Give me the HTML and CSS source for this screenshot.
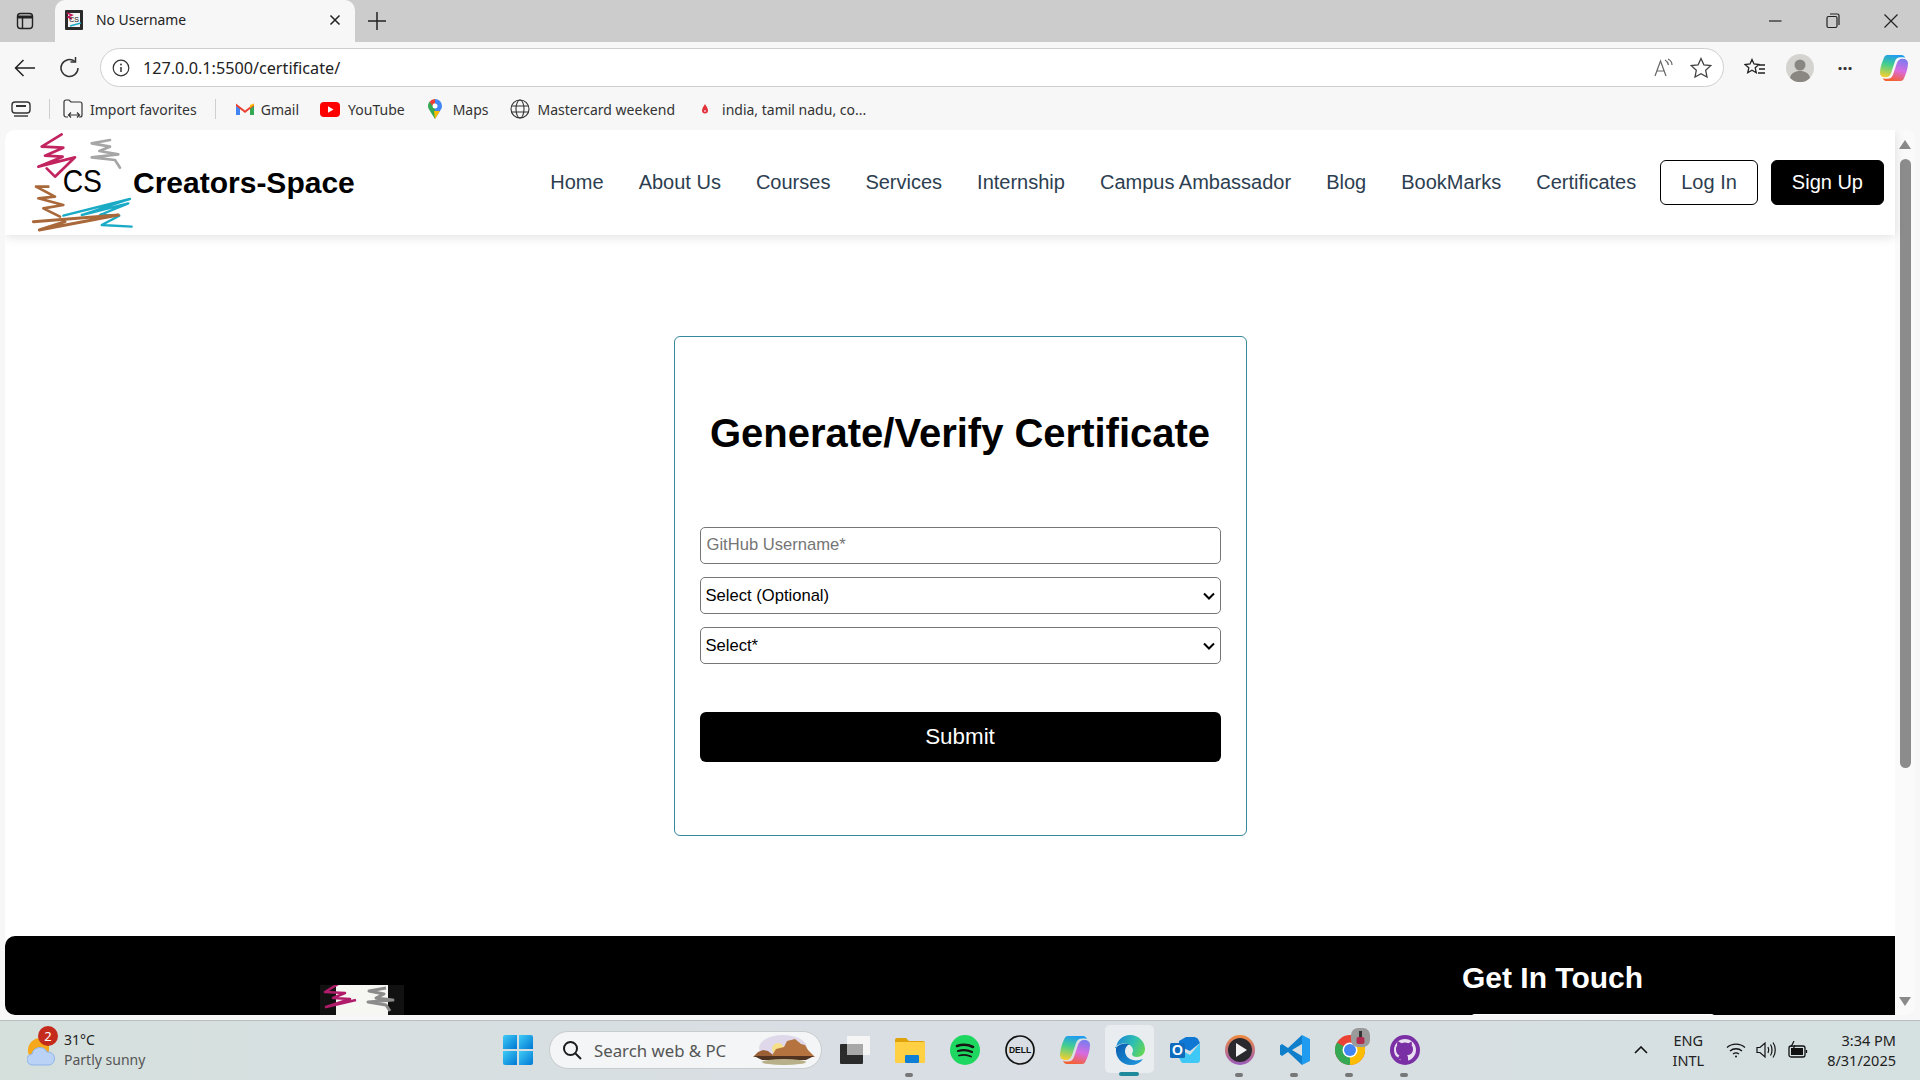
FILE: index.html
```html
<!DOCTYPE html>
<html lang="en">
<head>
    <meta charset="UTF-8">
    <title>No Username</title>
    <link rel="stylesheet" href="styles.css">
</head>
<body>
    <svg class="defs" width="0" height="0">
        <defs>
            <linearGradient id="copA" x1="0.5" y1="0" x2="0.3" y2="1">
                <stop offset="0" stop-color="#1f9cf0"/>
                <stop offset="0.45" stop-color="#45cf8c"/>
                <stop offset="1" stop-color="#f5cf30"/>
            </linearGradient>
            <linearGradient id="copB" x1="0.7" y1="0" x2="0.4" y2="1">
                <stop offset="0" stop-color="#7a7cf0"/>
                <stop offset="0.5" stop-color="#d86be0"/>
                <stop offset="1" stop-color="#f5602f"/>
            </linearGradient>
            <linearGradient id="edgeA" x1="0" y1="0.3" x2="1" y2="0.7">
                <stop offset="0" stop-color="#1a86d8"/>
                <stop offset="0.55" stop-color="#2fc0b0"/>
                <stop offset="1" stop-color="#66d653"/>
            </linearGradient>
            <linearGradient id="edgeB" x1="0" y1="0" x2="1" y2="1">
                <stop offset="0" stop-color="#0a5cad"/>
                <stop offset="1" stop-color="#1f9be0"/>
            </linearGradient>
            <linearGradient id="winA" x1="0" y1="0" x2="1" y2="1">
                <stop offset="0" stop-color="#3fcbf5"/>
                <stop offset="1" stop-color="#0078d4"/>
            </linearGradient>
            <linearGradient id="playRing" x1="0" y1="0" x2="0" y2="1">
                <stop offset="0" stop-color="#f08a3c"/>
                <stop offset="1" stop-color="#9a5cc0"/>
            </linearGradient>
            <symbol id="copilot" viewBox="0 0 30 30">
                <path d="M8 1h15c2 0 3 1 4 3-1-.5-3-.5-5-.5-3 0-5 1.500-6 4.500l-4 12c-1 3-3 5-6 5-4 0-6-2-6-5 0-5 2-11 4-15.500C5 2 6 1 8 1z" fill="url(#copA)"/>
                <path d="M22 29H7c-2 0-3-1-4-3 1 .5 3 .5 5 .5 3 0 5-1.500 6-4.500l4-12c1-3 3-5 6-5 4 0 6 2 6 5 0 5-2 11-4 15.500C25 28 24 29 22 29z" fill="url(#copB)"/>
            </symbol>
        </defs>
    </svg>

    <div class="browser">
        <div class="tabstrip">
            <span class="chrome-btn side-btn">
                <svg width="18" height="18" viewBox="0 0 18 18" fill="none" stroke="#222" stroke-width="1.400"><rect x="1.500" y="1.500" width="15" height="15" rx="3"/><path d="M1.500 5h15" stroke-width="3"/><path d="M6.500 5v11"/></svg>
            </span>
            <div class="tab">
                <svg class="favicon" width="18" height="20" viewBox="0 0 18 20">
                    <rect width="18" height="20" rx="1" fill="#2a2a2a"/>
                    <rect x="3" y="3" width="12" height="14" fill="#f4f4f4"/>
                    <path d="M2 3l5 2-4 2 4 2" fill="none" stroke="#c2185b" stroke-width="1.500"/>
                    <path d="M5 16l11-3" stroke="#19a9c6" stroke-width="1.500"/>
                    <text x="9" y="12" class="favicon-text">CS</text>
                </svg>
                <span class="tab-title">No Username</span>
                <svg class="tab-close" width="12" height="12" viewBox="0 0 12 12" stroke="#222" stroke-width="1.500"><path d="M1.500 1.500l9 9M10.500 1.500l-9 9"/></svg>
            </div>
            <svg class="new-tab" width="18" height="18" viewBox="0 0 18 18" stroke="#222" stroke-width="1.500"><path d="M9 0v18M0 9h18"/></svg>
            <div class="window-controls">
                <svg width="14" height="14" viewBox="0 0 14 14" stroke="#222" stroke-width="1.200"><path d="M1 7h12.500"/></svg>
                <svg width="14" height="16" viewBox="0 0 14 16" fill="none" stroke="#222" stroke-width="1.200"><rect x="1" y="3.500" width="10" height="11" rx="1.500"/><path d="M4 1h7.500a1.500 1.500 0 0 1 1.500 1.500V12"/></svg>
                <svg width="14" height="14" viewBox="0 0 14 14" stroke="#222" stroke-width="1.200"><path d="M.5.500l13 13M13.500.500l-13 13"/></svg>
            </div>
        </div>

        <div class="toolbar">
            <svg class="tool-back" width="22" height="18" viewBox="0 0 22 18" fill="none" stroke="#222" stroke-width="1.500"><path d="M21 9H2M9.500 1L1.500 9l8 8"/></svg>
            <svg class="tool-reload" width="22" height="22" viewBox="0 0 22 22" fill="none" stroke="#333" stroke-width="1.500"><path d="M19 11a8.500 8.500 0 1 1-3-6.500"/><path d="M16.500 0v5h-5"/></svg>
            <div class="address">
                <svg width="18" height="18" viewBox="0 0 18 18" fill="none" stroke="#333" stroke-width="1.200"><circle cx="9" cy="9" r="7.800"/><path d="M9 8v5" stroke-width="1.500"/><circle cx="9" cy="5.500" r=".9" fill="#333" stroke="none"/></svg>
                <span class="url">127.0.0.1:5500/certificate/</span>
                <svg class="addr-read" width="20" height="20" viewBox="0 0 20 20" fill="none" stroke="#666" stroke-width="1.200"><path d="M1 18L6.500 3 12 18M3 13h7"/><path d="M11 2c2 1 3 3 3.500 5M14 1c2 1 4 3.500 4 6"/></svg>
                <svg class="addr-star" width="22" height="22" viewBox="0 0 22 22" fill="none" stroke="#444" stroke-width="1.300"><path d="M11 1.500l2.900 6.300 6.800.8-5 4.700 1.300 6.800-6-3.400-6 3.400 1.300-6.800-5-4.700 6.800-.8z"/></svg>
            </div>
            <svg class="tool-favs" width="22" height="20" viewBox="0 0 22 20" fill="none" stroke="#222" stroke-width="1.300"><path d="M8 1.500l2 4.500 5 .5-3.800 3.300 1.100 5-4.300-2.500-4.300 2.500 1.100-5L1 6.500 6 6z"/><path d="M15 7h6M15 11h6M14 15h7"/></svg>
            <svg class="tool-profile" width="28" height="28" viewBox="0 0 28 28"><circle cx="14" cy="14" r="14" fill="#d5d3cf"/><circle cx="14" cy="11" r="5.500" fill="#8a8782"/><path d="M4 24c1-5 5-7 10-7s9 2 10 7a14 14 0 0 1-20 0z" fill="#8a8782"/></svg>
            <span class="tool-dots">···</span>
            <svg class="tool-copilot" width="28" height="28"><use href="#copilot"/></svg>
        </div>

        <div class="favbar">
            <svg class="fav-collections" width="20" height="16" viewBox="0 0 20 16" fill="none" stroke="#333" stroke-width="1.400"><rect x="1" y="1" width="18" height="11" rx="3"/><path d="M5 5h10" stroke-width="2"/><path d="M3 15h14"/></svg>
            <span class="fav-sep"></span>
            <div class="fav-item fav-import">
                <svg width="20" height="20" viewBox="0 0 20 20" fill="none" stroke="#333" stroke-width="1.200"><path d="M5 18H3a2 2 0 0 1-2-2V3a2 2 0 0 1 2-2h3l2 2h9a2 2 0 0 1 2 2v11a2 2 0 0 1-2 2h-1"/><path d="M6 16h10M8 13.500L5.500 16 8 18.500M14 13.500l2.500 2.500-2.500 2.500"/></svg>
                <span>Import favorites</span>
            </div>
            <span class="fav-sep fav-sep-2"></span>
            <div class="fav-item fav-gmail">
                <svg width="18" height="14" viewBox="0 0 18 14"><path d="M0 2v11h4V6z" fill="#4285f4"/><path d="M18 2v11h-4V6z" fill="#34a853"/><path d="M0 1.500l9 7 9-7V4l-9 7-9-7z" fill="#ea4335"/><path d="M14 3v3l4-3V1.500z" fill="#fbbc04"/></svg>
                <span>Gmail</span>
            </div>
            <div class="fav-item fav-youtube">
                <svg width="20" height="15" viewBox="0 0 20 15"><rect width="20" height="15" rx="4" fill="#f00"/><path d="M8 4.200l5.500 3.300L8 10.800z" fill="#fff"/></svg>
                <span>YouTube</span>
            </div>
            <div class="fav-item fav-maps">
                <svg width="14" height="20" viewBox="0 0 14 20"><path d="M7 0a7 7 0 0 1 7 7c0 2-1 3.500-2 5L7 20z" fill="#4285f4"/><path d="M7 20l-5-8C1 10.500 0 9 0 7a7 7 0 0 1 1.500-4.300L7 7z" fill="#34a853"/><path d="M1.500 2.700A7 7 0 0 1 7 0v4.500A2.500 2.500 0 0 0 4.500 7z" fill="#ea4335"/><path d="M7 20l5-8H6z" fill="#fbbc04"/><circle cx="7" cy="7" r="2.500" fill="#fff"/></svg>
                <span>Maps</span>
            </div>
            <div class="fav-item fav-master">
                <svg width="20" height="20" viewBox="0 0 20 20" fill="none" stroke="#333" stroke-width="1.100"><circle cx="10" cy="10" r="9"/><ellipse cx="10" cy="10" rx="4" ry="9"/><path d="M1.500 7h17M1.500 13h17"/></svg>
                <span>Mastercard weekend</span>
            </div>
            <div class="fav-item fav-india">
                <svg width="10" height="12" viewBox="0 0 10 12"><path d="M5 1c1 2 3 4 3 6.500a3 3 0 0 1-6 0C2 5 4 3 5 1z" fill="#e2333a"/><circle cx="5" cy="8" r="1" fill="#fbd"/></svg>
                <span>india, tamil nadu, co...</span>
            </div>
        </div>

        <div class="viewport">
            <div class="page">
                <div class="page-body">
                    <header class="site-header">
                        <div class="brand">
                            <svg class="brand-logo" width="105" height="105" viewBox="90 15 315 315" fill="none" stroke-linecap="round" stroke-linejoin="round">
                                <path d="M185 28L125 65 190 68 135 92 188 95 115 125 225 97 165 155 140 130" stroke="#c2245f" stroke-width="8"/>
                                <path d="M330 45L275 55 330 65 298 78 355 88 275 97 345 105 360 128" stroke="#a6a6a6" stroke-width="8"/>
                                <path d="M145 185L108 185 165 215 115 220 190 240 130 250 180 275" stroke="#a9683a" stroke-width="8"/>
                                <path d="M190 272L390 222 245 270 385 235 300 270 358 272 305 300 395 305" stroke="#19aac6" stroke-width="7"/>
                                <path d="M100 290L355 270 118 315 195 290" stroke="#a9683a" stroke-width="9"/>
                                <text x="188" y="201" class="logo-cs" textLength="118" lengthAdjust="spacingAndGlyphs">CS</text>
                            </svg>
                            <span class="brand-name">Creators-Space</span>
                        </div>
                        <nav class="site-nav">
                            <a href="#">Home</a>
                            <a href="#">About Us</a>
                            <a href="#">Courses</a>
                            <a href="#">Services</a>
                            <a href="#">Internship</a>
                            <a href="#">Campus Ambassador</a>
                            <a href="#">Blog</a>
                            <a href="#">BookMarks</a>
                            <a href="#">Certificates</a>
                        </nav>
                        <div class="auth">
                            <button class="btn-login">Log In</button>
                            <button class="btn-signup">Sign Up</button>
                        </div>
                    </header>

                    <main class="site-main">
                        <form class="cert-card">
                            <h1>Generate/Verify Certificate</h1>
                            <input class="field" type="text" placeholder="GitHub Username*">
                            <select class="field">
                                <option>Select (Optional)</option>
                            </select>
                            <select class="field">
                                <option>Select*</option>
                            </select>
                            <button class="btn-submit" type="button">Submit</button>
                        </form>
                    </main>

                    <footer class="site-footer">
                        <div class="footer-logo">
                            <svg width="84" height="44" viewBox="0 0 84 44" fill="none" stroke-linejoin="round">
                                <rect width="84" height="44" fill="#111"/>
                                <rect x="16" width="52" height="44" fill="#f6f6f2"/>
                                <path d="M23-4L5 7l20 1-12 5 17 1-24 8 30-7" stroke="#b01c6a" stroke-width="2.500"/>
                                <path d="M66 3L49 6l15 3-8 4 17 2-25 2 18 3 4 6" stroke="#8b8b8b" stroke-width="3"/>
                            </svg>
                        </div>
                        <div class="footer-contact">
                            <h2>Get In Touch</h2>
                            <input class="footer-input" type="text">
                        </div>
                    </footer>
                </div>
                <div class="scrollbar">
                    <span class="arrow-up"></span>
                    <span class="thumb"></span>
                    <span class="arrow-down"></span>
                </div>
            </div>
        </div>

        <div class="taskbar">
            <div class="weather">
                <svg class="weather-icon" width="28" height="34" viewBox="0 0 28 34">
                    <path d="M14 5A12 12 0 0 0 1 17c0 5 2 8 5 10h16V8z" fill="#f5a81c"/>
                    <path d="M6 32a5.500 5.500 0 0 1-1-11 8 8 0 0 1 15-2 6.500 6.500 0 0 1 2 13z" fill="#b9d2f5" stroke="#8fb4ea"/>
                </svg>
                <span class="weather-badge">2</span>
                <div class="weather-text">
                    <span class="temp">31°C</span>
                    <span class="cond">Partly sunny</span>
                </div>
            </div>

            <div class="task-cell start">
                <svg width="30" height="30" viewBox="0 0 30 30" fill="url(#winA)"><path d="M2 0h12v14H0V2a2 2 0 0 1 2-2z"/><path d="M16 0h12a2 2 0 0 1 2 2v12H16z"/><path d="M0 16h14v14H2a2 2 0 0 1-2-2z"/><path d="M16 16h14v12a2 2 0 0 1-2 2H16z"/></svg>
            </div>

            <div class="search-pill">
                <svg width="20" height="20" viewBox="0 0 20 20" fill="none" stroke="#1b1b1b" stroke-width="2"><circle cx="8.500" cy="8.500" r="6.500"/><path d="M13.500 13.500L19 19"/></svg>
                <span>Search web &amp; PC</span>
                <svg class="search-art" width="62" height="30" viewBox="0 0 62 30">
                    <ellipse cx="30" cy="13" rx="24" ry="13" fill="#dfd8ea"/>
                    <circle cx="25" cy="14" r="6" fill="#f7e08a"/>
                    <path d="M0 22l5-5 5-2 5 1 5 4 3 2z" fill="#9a5f35"/>
                    <path d="M18 22l5-8 8-2 3-6 8-2 6 5 4 1 3 5 7 7z" fill="#b5743f"/>
                    <path d="M1 21h60l-8 4H9z" fill="#4f3320"/>
                    <ellipse cx="31" cy="27" rx="22" ry="3" fill="#b8b088"/>
                </svg>
            </div>

            <div class="task-cell">
                <svg width="30" height="28" viewBox="0 0 30 28"><rect y="8" width="23" height="20" rx="1" fill="#2b2b2b"/><rect x="7" width="23" height="19" rx="1" fill="#f5f5f5"/><rect x="7" y="8" width="16" height="11" fill="#a8a8a8"/></svg>
            </div>
            <div class="task-cell has-dot">
                <svg width="30" height="26" viewBox="0 0 30 26"><path d="M0 3a2 2 0 0 1 2-2h9l3 3h14a2 2 0 0 1 2 2v2H0z" fill="#e0a20b"/><rect y="5" width="30" height="21" rx="1" fill="#ffd044"/><rect x="10" y="18" width="14" height="8" rx="1" fill="#0f7fd6"/></svg>
            </div>
            <div class="task-cell">
                <svg width="30" height="30" viewBox="0 0 30 30" fill="none" stroke="#191414" stroke-linecap="round"><circle cx="15" cy="15" r="15" fill="#1ed760" stroke="none"/><path d="M7 11c6-2 11-1.500 16 1" stroke-width="2.600"/><path d="M8 16c5-1.500 10-1 14 1" stroke-width="2.200"/><path d="M9 20.500c4-1 8-1 12 1" stroke-width="1.800"/></svg>
            </div>
            <div class="task-cell">
                <svg width="30" height="30" viewBox="0 0 30 30"><circle cx="15" cy="15" r="14" fill="none" stroke="#111" stroke-width="1.700"/><text x="15" y="18" class="dell-text">DELL</text></svg>
            </div>
            <div class="task-cell">
                <svg width="30" height="30"><use href="#copilot"/></svg>
            </div>
            <div class="task-cell active">
                <svg width="30" height="30" viewBox="0 0 30 30">
                    <path d="M1 13C2 5 8 0 15 0c9 0 15 7 15 14 0 5-4 8-8 8-3 0-5-1-5-3 0-1 1-1.500 1-3.500 0-4-4-7-8-7-5 0-9 2-10 4.500z" fill="url(#edgeA)"/>
                    <path d="M1 13C0 23 7 30 16 30c5 0 9-2 12-6-3 1-7 2-10 1-5-1-8-5-8-9 0-3 2-6 5-7-6-1-12 0-14 4z" fill="url(#edgeB)"/>
                </svg>
                <span class="active-bar"></span>
            </div>
            <div class="task-cell">
                <svg width="30" height="26" viewBox="0 0 30 26">
                    <path d="M9 4l7-4h8c2 0 3 1 4 2l2 4-10 8-11-5z" fill="#0f78d4"/>
                    <path d="M30 6v17a3 3 0 0 1-3 3H12l-3-5V12l11 6z" fill="#3fc8f5"/>
                    <rect y="6" width="15" height="15" rx="1.500" fill="#0f6cbd"/>
                    <text x="7.500" y="18" class="outlook-text">O</text>
                </svg>
            </div>
            <div class="task-cell has-dot">
                <svg width="30" height="30" viewBox="0 0 30 30"><circle cx="15" cy="15" r="15" fill="url(#playRing)"/><circle cx="15" cy="15" r="12" fill="#2a2a2e"/><path d="M11 8l11 7-11 7z" fill="#f2f2f2"/></svg>
            </div>
            <div class="task-cell has-dot">
                <svg width="30" height="30" viewBox="0 0 30 30"><path d="M22 0L8 13 2 9 0 10.500v9L2 21l6-4 14 13v-9l-10-6 10-6z" fill="#0f7fcc"/><path d="M22 0l8 4v22l-8 4z" fill="#1f9cf0"/></svg>
            </div>
            <div class="task-cell has-dot">
                <svg width="30" height="30" viewBox="0 0 30 30"><circle cx="15" cy="15" r="15" fill="#ea4335"/><path d="M15 15L15 30A15 15 0 0 1 2 7.500z" fill="#34a853"/><path d="M15 15L28 7.500A15 15 0 0 1 15 30z" fill="#fbbc04"/><circle cx="15" cy="15" r="7.500" fill="#fff"/><circle cx="15" cy="15" r="6" fill="#4285f4"/></svg>
                <svg class="chrome-badge" width="19" height="19" viewBox="0 0 19 19"><rect width="19" height="19" rx="7" fill="#9a9a9a"/><path d="M9.500 3v7" stroke="#333" stroke-width="3"/><rect x="5.500" y="9" width="8" height="7" rx="2" fill="#b02c50"/></svg>
            </div>
            <div class="task-cell has-dot">
                <svg width="30" height="30" viewBox="0 0 30 30"><circle cx="15" cy="15" r="15" fill="#7b2fa5"/><circle cx="15" cy="15" r="11" fill="#e9dff0"/><path d="M8.500 6.500l3 1.800a9 9 0 0 1 7 0l3-1.800c.5 1.500.5 3 .2 4 1 1 1.300 2.500 1.300 3.500 0 4-2.500 6-6 6.300.8.7 1 1.700 1 3v3h-7.500v-2c-2.500.5-4-.5-5-3 1 0 2 1 3 1.500 0-1 .4-2 1-2.500C8 20 6 18 6 14c0-1 .3-2.500 1.300-3.500-.3-1-.3-2.500.2-4z" fill="#7b2fa5"/></svg>
            </div>

            <div class="tray">
                <svg class="tray-chevron" width="14" height="8" viewBox="0 0 14 8" fill="none" stroke="#111" stroke-width="1.600"><path d="M1 7l6-6 6 6"/></svg>
                <div class="tray-lang"><span>ENG</span><span>INTL</span></div>
                <svg class="tray-wifi" width="20" height="16" viewBox="0 0 20 16" fill="none" stroke="#111" stroke-width="1.300"><path d="M1 5.500c5-4.500 13-4.500 18 0M4 9c3.500-3 8.500-3 12 0M7 12c2-1.500 4-1.500 6 0"/><circle cx="10" cy="14.500" r="1" fill="#111" stroke="none"/></svg>
                <svg class="tray-vol" width="20" height="20" viewBox="0 0 20 20" fill="none" stroke="#111" stroke-width="1.200"><path d="M1 7.500h3L9 3v14l-5-4.500H1z"/><path d="M12 7c1 2 1 4 0 6M14.500 4.500c2 3 2 8 0 11M17 2.500c3 4 3 11 0 15"/></svg>
                <svg class="tray-batt" width="20" height="18" viewBox="0 0 20 18" fill="none" stroke="#111" stroke-width="1.300"><rect x="1" y="5" width="16" height="11" rx="2"/><path d="M18.500 9v3"/><rect x="3" y="7" width="12" height="7" fill="#111" stroke="none"/><path d="M6 0L3.500 5h3L5 9" stroke-width="1.200" fill="#d6dfe0"/></svg>
                <div class="tray-clock"><span>3:34 PM</span><span>8/31/2025</span></div>
            </div>
        </div>
    </div>
</body>
</html>
```

FILE: styles.css
```css
* {
    margin: 0;
    padding: 0;
    box-sizing: border-box;
}

html, body {
    height: 100%;
    overflow: hidden;
}

body {
    font-family: 'Liberation Sans', Arial, sans-serif;
    background-color: #f7f7f7;
}

svg {
    display: block;
    flex-shrink: 0;
}

.defs {
    position: absolute;
}

.browser {
    display: flex;
    flex-direction: column;
    height: 1080px;
    width: 1920px;
    font-family: 'Noto Sans', 'Open Sans', sans-serif;
}

/* tab strip */
.tabstrip {
    display: flex;
    align-items: center;
    height: 42px;
    background-color: #cccccc;
}

.chrome-btn {
    display: flex;
    justify-content: center;
    width: 55px;
    padding-right: 5px;
}

.tab {
    display: flex;
    align-items: center;
    width: 300px;
    height: 42px;
    padding: 0 14px 2px 10px;
    background-color: #f7f7f7;
    border-radius: 10px 10px 0 0;
}

.favicon-text {
    font-family: 'Liberation Sans', sans-serif;
    font-size: 7px;
    text-anchor: middle;
    fill: #111;
}

.tab-title {
    margin: -2px 0 0 13px;
    font-size: 13.900px;
    color: #222;
}

.tab-close {
    margin-left: auto;
}

.new-tab {
    margin-left: 13px;
}

.window-controls {
    display: flex;
    align-items: center;
    gap: 44px;
    margin-left: auto;
    padding-right: 22px;
}

/* address row */
.toolbar {
    display: flex;
    align-items: center;
    height: 46px;
    padding: 5px 0 0 14px;
    background-color: #f7f7f7;
}

.tool-reload {
    margin-left: 23px;
}

.address {
    display: flex;
    align-items: center;
    width: 1624px;
    height: 39px;
    margin-left: 19px;
    padding: 0 11px 0 11px;
    background-color: #fff;
    border: 1px solid #cfcfcf;
    border-radius: 20px;
}

.url {
    margin-left: 13px;
    font-size: 16.200px;
    color: #222;
}

.addr-read {
    margin-left: auto;
}

.addr-star {
    margin-left: 16px;
}

.tool-favs {
    margin-left: 20px;
}

.tool-profile {
    margin-left: 20px;
}

.tool-dots {
    width: 44px;
    margin-left: 9px;
    text-align: center;
    font-size: 18px;
    font-weight: 700;
    color: #333;
}

.tool-copilot {
    margin-left: 13px;
}

/* favorites row */
.favbar {
    display: flex;
    align-items: center;
    height: 42px;
    padding-left: 11px;
    background-color: #f7f7f7;
    font-size: 14px;
    color: #333;
}

.fav-sep {
    width: 1px;
    height: 20px;
    margin-left: 18px;
    background-color: #cfcfcf;
}

.fav-sep-2 {
    margin-left: 18px;
}

.fav-item {
    display: flex;
    align-items: center;
    gap: 8px;
}

.fav-import {
    margin-left: 13px;
    gap: 7px;
}

.fav-gmail {
    margin-left: 20px;
    gap: 7px;
}

.fav-youtube {
    margin-left: 21px;
}

.fav-maps {
    margin-left: 23px;
    gap: 11px;
}

.fav-master {
    margin-left: 21px;
}

.fav-india {
    margin-left: 25px;
    gap: 12px;
}

/* page */
.viewport {
    flex: 1;
    min-height: 0;
    padding: 0 5px 5px;
    background-color: #f7f7f7;
}

.page {
    display: flex;
    height: 100%;
    overflow: hidden;
    background-color: #fff;
    border-radius: 10px;
    font-family: 'Liberation Sans', Arial, sans-serif;
}

.page-body {
    flex: 1;
    min-width: 0;
}

.site-header {
    display: flex;
    align-items: center;
    height: 105px;
    padding-right: 11px;
    background-color: #fff;
    box-shadow: 0 2px 10px rgba(0, 0, 0, 0.12);
    position: relative;
}

.brand {
    display: flex;
    align-items: center;
    margin-left: 25px;
}

.logo-cs {
    font-family: 'Liberation Sans', sans-serif;
    font-size: 92px;
    fill: #000;
    stroke: none;
}

.brand-name {
    margin: 1px 0 0 -2px;
    font-size: 30px;
    font-weight: 700;
    color: #000;
}

.site-nav {
    display: flex;
    gap: 35px;
    margin-left: auto;
}

.site-nav a {
    font-size: 20px;
    color: #2c3e50;
    text-decoration: none;
}

.auth {
    display: flex;
    gap: 13px;
    margin-left: 24px;
}

.auth button {
    height: 45px;
    padding: 0 20px;
    font-family: inherit;
    font-size: 20px;
    border: 1px solid #000;
    border-radius: 6px;
}

.btn-login {
    background-color: #fff;
    color: #2c3e50;
}

.btn-signup {
    background-color: #000;
    color: #fff;
}

.site-main {
    display: flex;
    justify-content: center;
    padding: 101px 0 100px 20px;
}

.cert-card {
    display: flex;
    flex-direction: column;
    width: 573px;
    height: 500px;
    padding: 73px 25px 0;
    border: 1px solid #35889a;
    border-radius: 6px;
    background-color: #fff;
}

.cert-card h1 {
    margin-bottom: 71px;
    font-size: 40px;
    line-height: 46px;
    font-weight: 700;
    text-align: center;
    color: #000;
}

.field {
    width: 100%;
    height: 37px;
    margin-bottom: 13px;
    font-family: inherit;
    font-size: 16.600px;
    color: #000;
    background-color: #fff;
    border: 1px solid #767676;
    border-radius: 5px;
}

input.field {
    padding: 0 6px 2px;
}

select.field {
    padding-left: 5px;
    appearance: none;
    background-image: url("data:image/svg+xml,%3Csvg xmlns='http://www.w3.org/2000/svg' width='12' height='8' viewBox='0 0 12 8'%3E%3Cpath d='M1 1.500l5 5 5-5' fill='none' stroke='%23000' stroke-width='2'/%3E%3C/svg%3E");
    background-repeat: no-repeat;
    background-position: right 5px center;
}

.btn-submit {
    height: 50px;
    margin-top: 35px;
    font-family: inherit;
    font-size: 22.400px;
    color: #fff;
    background-color: #000;
    border: none;
    border-radius: 6px;
}

.site-footer {
    display: flex;
    height: 400px;
    background-color: #000;
    border-radius: 10px 0 0 0;
}

.footer-logo {
    margin: 49px 0 0 315px;
}

.footer-contact {
    margin-left: 1058px;
    padding-top: 23px;
}

.footer-contact h2 {
    font-size: 30px;
    line-height: 37px;
    font-weight: 700;
    color: #fff;
}

.footer-input {
    display: block;
    width: 244px;
    height: 40px;
    margin: 18px 0 0 9px;
    background-color: #fff;
    border: none;
    border-radius: 4px;
}

.scrollbar {
    display: flex;
    flex-direction: column;
    align-items: center;
    width: 20px;
    padding-top: 10px;
    background-color: #fafafa;
}

.arrow-up {
    width: 0;
    height: 0;
    border-left: 6px solid transparent;
    border-right: 6px solid transparent;
    border-bottom: 9px solid #8a8a8a;
}

.thumb {
    width: 11px;
    height: 609px;
    margin-top: 10px;
    background-color: #8c8c8c;
    border-radius: 6px;
}

.arrow-down {
    width: 0;
    height: 0;
    margin-top: 229px;
    border-left: 6px solid transparent;
    border-right: 6px solid transparent;
    border-top: 9px solid #8a8a8a;
}

/* taskbar */
.taskbar {
    display: flex;
    align-items: center;
    height: 60px;
    padding-bottom: 1px;
    background: linear-gradient(90deg, #d5e0dd, #d9dee4 45%, #d5e0e0);
    border-top: 1px solid #b9bfc0;
}

.weather {
    display: flex;
    align-items: center;
    width: 490px;
    padding-left: 27px;
    position: relative;
}

.weather-badge {
    position: absolute;
    left: 38px;
    top: -4px;
    width: 20px;
    height: 20px;
    font-size: 13px;
    line-height: 20px;
    text-align: center;
    color: #fff;
    background-color: #c42b1c;
    border-radius: 50%;
}

.weather-text {
    display: flex;
    flex-direction: column;
    margin-left: 9px;
    font-size: 14px;
    line-height: 20px;
    color: #222;
}

.cond {
    color: #555;
}

.task-cell {
    display: flex;
    justify-content: center;
    align-items: center;
    width: 55px;
    height: 58px;
    position: relative;
}

.task-cell.start {
    margin-right: 4px;
}

.search-pill {
    display: flex;
    align-items: center;
    width: 273px;
    height: 38px;
    margin-right: 5px;
    padding: 0 6px 0 12px;
    background-color: #f3f5f6;
    border: 1px solid #c9cccd;
    border-radius: 19px;
    font-size: 16.800px;
    color: #555;
}

.search-pill span {
    margin-left: 12px;
}

.search-art {
    margin-left: auto;
}

.dell-text {
    font-family: 'Liberation Sans', sans-serif;
    font-size: 8.500px;
    font-weight: 700;
    text-anchor: middle;
    fill: #111;
}

.outlook-text {
    font-family: 'Liberation Sans', sans-serif;
    font-size: 14px;
    font-weight: 700;
    text-anchor: middle;
    fill: #fff;
}

.has-dot::after {
    content: "";
    position: absolute;
    left: 23px;
    bottom: 2px;
    width: 8px;
    height: 4px;
    background-color: #777;
    border-radius: 2px;
}

.active::before {
    content: "";
    position: absolute;
    left: 3px;
    top: 4px;
    width: 49px;
    height: 48px;
    background-color: rgba(255, 255, 255, 0.45);
    border-radius: 5px;
}

.active svg {
    position: relative;
}

.active-bar {
    position: absolute;
    left: 17px;
    bottom: 3px;
    width: 20px;
    height: 4px;
    background-color: #1f8a9c;
    border-radius: 2px;
}

.chrome-badge {
    position: absolute;
    left: 29px;
    top: 7px;
}

.tray {
    display: flex;
    align-items: center;
    margin-left: auto;
    padding-right: 24px;
    font-size: 14.500px;
    color: #222;
}

.tray-lang {
    display: flex;
    flex-direction: column;
    align-items: center;
    margin-left: 25px;
    line-height: 20px;
}

.tray-wifi {
    margin-left: 22px;
}

.tray-vol {
    margin-left: 10px;
}

.tray-batt {
    margin-left: 12px;
}

.tray-clock {
    display: flex;
    flex-direction: column;
    align-items: flex-end;
    margin-left: 19px;
    line-height: 20px;
}
```
